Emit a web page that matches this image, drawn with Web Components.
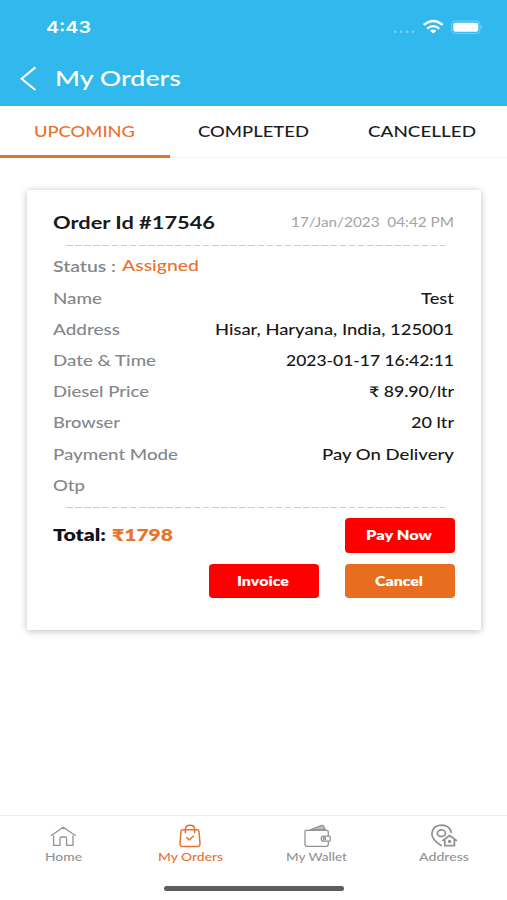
<!DOCTYPE html>
<html lang="en">
<head>
<meta charset="utf-8">
<title>My Orders</title>
<style>
html, body {
    margin: 0;
    height: 100%;
    background: #fff;
    font-family: Lato, "Liberation Sans", sans-serif;
    --orange: #e9712f;
    --grey: #85878b;
}
</style>
</head>
<body>
<orders-app></orders-app>

<script>
/**
 * Builds a template from a markup string.
 */
const makeTemplate = (markup) => {
  const template = document.createElement('template')
  template.innerHTML = markup
  return template
}

/**
 * Base class that clones the template into the shadow root.
 */
class BaseElement extends HTMLElement {
  constructor () {
    super()

    this.attachShadow({ mode: 'open' })
      .appendChild(this.constructor.template.content.cloneNode(true))
  }
}

/**
 * Text widened to the width given in the w attribute.
 */
customElements.define('wide-text',
  class extends BaseElement {
    static template = makeTemplate(`
<style>
:host { display: flex; flex: none; }
span { flex: none; white-space: pre; transform-origin: 0 50%; }
</style>
<span><slot></slot></span>
`)

    connectedCallback () {
      const span = this.shadowRoot.querySelector('span')
      const width = Number(this.getAttribute('w'))
      this.style.width = width + 'px'
      const natural = span.getBoundingClientRect().width
      if (natural > 0) {
        span.style.transform = 'scaleX(' + width / natural + ')'
      }
    }
  })

customElements.define('status-bar',
  class extends BaseElement {
    static template = makeTemplate(`
<style>
:host { display: flex; justify-content: space-between; height: 54px; padding: 0 23px 0 46px; color: #fff; }
wide-text { font: 600 16.5px/55px Inter, sans-serif; height: 54px; }
svg { margin-top: 16px; }
</style>
<wide-text w="45">4:43</wide-text>
<svg width="92" height="22" viewBox="0 0 92 22">
  <g fill="#fff" opacity=".35">
    <circle cx="3.2" cy="15.8" r="1.3"/><circle cx="9.2" cy="15.8" r="1.3"/>
    <circle cx="15.2" cy="15.8" r="1.3"/><circle cx="21" cy="15.8" r="1.3"/>
  </g>
  <g fill="none" stroke="#fff" stroke-width="2.3">
    <path d="M31.7 8.9Q41.2 1 50.7 8.9"/>
    <path d="M35.1 12.6Q41.2 7.6 47.3 12.6"/>
  </g>
  <path d="M38 14.7Q41.2 12.3 44.4 14.7L41.2 17.4Z" fill="#fff"/>
  <rect x="59.7" y="5" width="28.3" height="12.4" rx="3.5" fill="none" stroke="#fff" stroke-opacity=".35"/>
  <rect x="61.3" y="6.7" width="25" height="9" rx="2" fill="#fff"/>
  <path d="M89.5 9.3q2 1.8 0 3.7z" fill="#fff" opacity=".5"/>
</svg>
`)
  })

customElements.define('title-bar',
  class extends BaseElement {
    static template = makeTemplate(`
<style>
:host { display: flex; height: 52px; padding-left: 20px; color: #fff; }
svg { margin: 12px 18px 0 0; }
wide-text { font-size: 21px; font-weight: 500; line-height: 47px; }
</style>
<svg width="17" height="26" viewBox="0 0 17 26" fill="none" stroke="#fff" stroke-width="2.1"><path d="M15.4 1.4L1.6 12.7L15.4 24"/></svg>
<wide-text w="126">My Orders</wide-text>
`)
  })

customElements.define('tab-item',
  class extends BaseElement {
    static template = makeTemplate(`
<style>
:host {
    box-sizing: border-box;
    display: flex;
    justify-content: center;
    height: 52px;
    padding-right: 1.5px;
    color: #1c1c1c;
    font-size: 15.3px;
    font-weight: 500;
    line-height: 51px;
    border-bottom: 1px solid #f4f4f4;
}
:host([active]) { color: var(--orange); border-bottom: 3px solid var(--orange); }
</style>
<slot></slot>
`)
  })

customElements.define('order-row',
  class extends BaseElement {
    static template = makeTemplate(`
<style>
:host { display: flex; justify-content: space-between; height: 31.2px; line-height: 31px; font-size: 14.8px; font-weight: 500; color: var(--grey); }
::slotted([slot=value]) { color: #181818; }
</style>
<slot></slot><slot name="value"></slot>
`)
  })

customElements.define('dash-line',
  class extends BaseElement {
    static template = makeTemplate(`
<style>
:host {
    display: block;
    height: 1.4px;
    margin: 0 9px 0 13px;
    background: repeating-linear-gradient(90deg, #ccc 0 6.6px, transparent 6.6px 9.12px);
}
</style>
`)
  })

customElements.define('action-button',
  class extends BaseElement {
    static template = makeTemplate(`
<style>
:host {
    box-sizing: border-box;
    display: flex;
    justify-content: center;
    width: 110px;
    height: 34.5px;
    padding-right: 1.5px;
    border-radius: 4px;
    background: #fe0000;
    color: #fff;
    font-size: 13px;
    font-weight: 800;
    line-height: 34px;
}
:host([kind=cancel]) { background: #e96d1f; }
</style>
<slot></slot>
`)
  })

customElements.define('order-card',
  class extends BaseElement {
    static template = makeTemplate(`
<style>
:host {
    box-sizing: border-box;
    display: block;
    height: 440px;
    margin: 32px 26px 0 27px;
    padding: 19px 27px 0 26px;
    border-radius: 2px;
    background: #fff;
    box-shadow: 0 1px 7px rgba(0, 0, 0, .27);
}
.head { display: flex; justify-content: space-between; height: 36px; line-height: 28px; }
.id { font-size: 16.6px; font-weight: 700; color: #1a1a1a; }
.date { font-size: 12.9px; color: #a3a3a3; line-height: 27px; }
.status { display: flex; gap: 6px; height: 36.2px; line-height: 41px; font-size: 14.8px; font-weight: 500; }
.status .label { color: var(--grey); font-weight: 600; }
.status .state { color: var(--orange); line-height: 39px; }
.rows { height: 224px; }
.total { display: flex; gap: 6px; height: 33px; margin-top: 10.4px; font-size: 16.6px; font-weight: 800; line-height: 35px; color: #11131c; }
.price { color: #e5762c; }
</style>
<div class="head">
  <wide-text class="id" w="162">Order Id #17546</wide-text>
  <wide-text class="date" w="163">17/Jan/2023  04:42 PM</wide-text>
</div>
<dash-line></dash-line>
<div class="status">
  <wide-text class="label" w="63">Status :</wide-text>
  <wide-text class="state" w="77">Assigned</wide-text>
</div>
<div class="rows">
  <order-row><wide-text w="49">Name</wide-text><wide-text slot="value" w="33">Test</wide-text></order-row>
  <order-row><wide-text w="67">Address</wide-text><wide-text slot="value" w="239">Hisar, Haryana, India, 125001</wide-text></order-row>
  <order-row><wide-text w="103">Date &amp; Time</wide-text><wide-text slot="value" w="168">2023-01-17 16:42:11</wide-text></order-row>
  <order-row><wide-text w="96">Diesel Price</wide-text><wide-text slot="value" w="85">₹ 89.90/ltr</wide-text></order-row>
  <order-row><wide-text w="67">Browser</wide-text><wide-text slot="value" w="43">20 ltr</wide-text></order-row>
  <order-row><wide-text w="125">Payment Mode</wide-text><wide-text slot="value" w="132">Pay On Delivery</wide-text></order-row>
  <order-row><wide-text w="32">Otp</wide-text></order-row>
</div>
<dash-line></dash-line>
<div class="total"><wide-text w="53">Total:</wide-text><wide-text class="price" w="61">₹1798</wide-text></div>
<slot name="actions"></slot>
`)
  })

customElements.define('order-actions',
  class extends BaseElement {
    static template = makeTemplate(`
<style>
:host {
    display: grid;
    grid-template-columns: 110px 110px;
    justify-content: end;
    gap: 11px 26.5px;
    margin: -33px -1px 0 0;
}
.pay { grid-column: 2; }
</style>
<action-button class="pay"><wide-text w="66">Pay Now</wide-text></action-button>
<action-button><wide-text w="52">Invoice</wide-text></action-button>
<action-button kind="cancel"><wide-text w="48">Cancel</wide-text></action-button>
`)
  })

customElements.define('nav-item',
  class extends BaseElement {
    static template = makeTemplate(`
<style>
:host {
    display: flex;
    flex-direction: column;
    align-items: center;
    padding-top: 7px;
    color: #929397;
    font-size: 11.3px;
    font-weight: 500;
    line-height: 14px;
}
:host([active]) { color: var(--orange); }
</style>
<slot name="icon"></slot>
<slot></slot>
`)
  })

customElements.define('bottom-nav',
  class extends BaseElement {
    static template = makeTemplate(`
<style>
:host {
    box-sizing: border-box;
    display: grid;
    grid-template-columns: repeat(4, 1fr);
    grid-template-rows: 70px 5px;
    height: 85px;
    border-top: 1px solid #ececec;
}
svg { display: block; flex: none; width: 28px; height: 27px; fill: none; stroke: currentColor; stroke-width: 1.3; stroke-linecap: round; stroke-linejoin: round; }
.bar { grid-column: 1 / -1; justify-self: center; width: 180px; height: 5px; border-radius: 3px; background: #5d5d5d; }
</style>
<nav-item>
  <svg slot="icon" viewBox="0 0 28 27"><path d="M2.3 12.5L14.3 4.2L26.3 12.5M4.6 13V22.4H11V15.7Q11 14 12.6 14H16Q17.6 14 17.6 15.7V22.4H24V13"/></svg>
  <wide-text w="37">Home</wide-text>
</nav-item>
<nav-item active>
  <svg slot="icon" viewBox="0 0 28 27"><g stroke-width="1.5"><path d="M6.7 6.8H21.3Q22.8 6.8 23 8.3L24 20.5Q24.2 23.4 21.4 23.4H6.6Q3.8 23.4 4 20.5L5 8.3Q5.2 6.8 6.7 6.8Z"/><path d="M9.3 9.7V6.5Q9.3 2.2 14 2.2T18.7 6.5V9.7M10.7 14.5L13.2 17L17.3 13.2"/></g></svg>
  <wide-text w="65">My Orders</wide-text>
</nav-item>
<nav-item>
  <svg slot="icon" viewBox="0 0 28 27"><path d="M6.7 7L18.7 2.4Q20 2 20.6 3.2L22.5 7Z" fill="#bbbcbf"/><path d="M2.2 7.4H23.7Q25.3 7.4 25.3 9V13.1M25.3 18.2V21.3Q25.3 23.3 23.3 23.3H4Q2 23.3 2 21.3V8.5M26.3 13.2H20.8Q18.2 13.2 18.2 15.7T20.8 18.2H26.3Q27.3 18.2 27.3 17.2V14.2Q27.3 13.2 26.3 13.2Z"/><circle cx="21.5" cy="15.7" r="1.2"/></svg>
  <wide-text w="61">My Wallet</wide-text>
</nav-item>
<nav-item>
  <svg slot="icon" viewBox="0 0 28 27"><g stroke-width="1.8"><path d="M11.2 22.6Q1.3 16 1.9 10.3Q2.7 2.4 11.6 2.2Q19.3 2.2 21.2 9.2"/><ellipse cx="11.4" cy="10.2" rx="4.1" ry="3.3"/><path d="M12.8 17.4L19.6 12.6L26.4 17.4M14.8 17.2V22.7H24.4V17.2"/></g><circle cx="19.6" cy="18.6" r="1.1" fill="currentColor"/></svg>
  <wide-text w="50">Address</wide-text>
</nav-item>
<div class="bar"></div>
`)
  })

customElements.define('orders-app',
  class extends BaseElement {
    static template = makeTemplate(`
<style>
:host { display: flex; flex-direction: column; height: 900px; }
header { height: 106px; background: #31b8ec; }
nav { display: grid; grid-template-columns: 170px 168px 1fr; }
main { flex: 1; }
</style>
<header>
  <status-bar></status-bar>
  <title-bar></title-bar>
</header>
<nav>
  <tab-item active><wide-text w="101">UPCOMING</wide-text></tab-item>
  <tab-item><wide-text w="111">COMPLETED</wide-text></tab-item>
  <tab-item><wide-text w="108">CANCELLED</wide-text></tab-item>
</nav>
<main>
  <order-card><order-actions slot="actions"></order-actions></order-card>
</main>
<bottom-nav></bottom-nav>
`)
  })
</script>
</body>
</html>
